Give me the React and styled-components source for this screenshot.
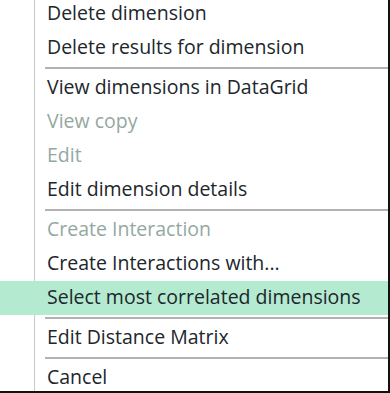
import React from 'react';
import styled, { createGlobalStyle } from 'styled-components';

const GlobalStyle = createGlobalStyle`
  html, body {
    margin: 0;
    padding: 0;
    background: #ffffff;
  }
  body {
    font-family: 'Open Sans', 'Noto Sans', sans-serif;
  }
`;

const items = [
  { label: 'Delete dimension' },
  { label: 'Delete results for dimension' },
  { sep: true },
  { label: 'View dimensions in DataGrid' },
  { label: 'View copy', disabled: true },
  { label: 'Edit', disabled: true },
  { label: 'Edit dimension details' },
  { sep: true },
  { label: 'Create Interaction', disabled: true },
  { label: 'Create Interactions with...' },
  { label: 'Select most correlated dimensions', active: true },
  { sep: true },
  { label: 'Edit Distance Matrix' },
  { sep: true },
  { label: 'Cancel' },
];

export default function App() {
  return (
    <>
      <GlobalStyle />
      <Frame>
        <Menu>
          {items.map((item, i) =>
            item.sep ? (
              <Separator key={i} />
            ) : (
              <Item key={i} $disabled={item.disabled} $active={item.active}>
                {item.label}
              </Item>
            )
          )}
        </Menu>
      </Frame>
    </>
  );
}

const Frame = styled.div`
  width: 390px;
  height: 393px;
  box-sizing: border-box;
  border-right: 2px solid #111;
  border-bottom: 2px solid #111;
  overflow: hidden;
  background: linear-gradient(
    to right,
    #ffffff 0,
    #ffffff 34px,
    #c9c9c9 34px,
    #c9c9c9 35px,
    #ffffff 35px
  );
`;

const Menu = styled.div`
  display: flex;
  flex-direction: column;
  margin-top: -3px;
`;

const Item = styled.div`
  height: 34px;
  box-sizing: border-box;
  display: flex;
  align-items: center;
  padding: 0 0 3px 47px;
  font-size: 19.5px;
  color: ${(p) => (p.$disabled ? '#94a8a1' : '#20262b')};
  background: ${(p) => (p.$active ? '#b3ead0' : 'transparent')};
  white-space: nowrap;
`;

const Separator = styled.div`
  height: 2px;
  margin: 2px 0 2px 45px;
  background: #b2b2b2;
`;
